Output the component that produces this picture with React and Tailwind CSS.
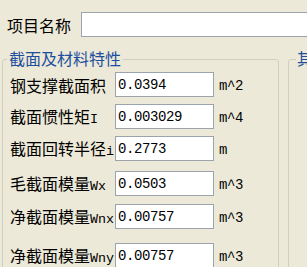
import React from "react";

const rows = [
  { cn: "钢支撑截面积", en: "", value: "0.0394", unit: "m^2", mt: "mt-[12px]" },
  { cn: "截面惯性矩", en: "I", value: "0.003029", unit: "m^4", mt: "mt-[7px]" },
  { cn: "截面回转半径", en: "i", value: "0.2773", unit: "m", mt: "mt-[7px]" },
  { cn: "毛截面模量", en: "Wx", value: "0.0503", unit: "m^3", mt: "mt-[10px]" },
  { cn: "净截面模量", en: "Wnx", value: "0.00757", unit: "m^3", mt: "mt-[8px]" },
  { cn: "净截面模量", en: "Wny", value: "0.00757", unit: "m^3", mt: "mt-[14px]" },
];

const cjk = { fontFamily: '"Noto Sans CJK SC", "Noto Sans", sans-serif' };
const mono = { fontFamily: '"Liberation Mono", "DejaVu Sans Mono", monospace' };

function Field({ value, className = "" }) {
  return (
    <div
      className={`h-[25px] shrink-0 bg-white border border-[#9ba3ab] flex items-center pl-[2px] text-[14px] tracking-[-0.4px] text-black leading-none ${className}`}
      style={mono}
    >
      {value}
    </div>
  );
}

function Row({ r }) {
  return (
    <div className={`flex items-center ${r.mt}`}>
      <div
        className="w-[112px] shrink-0 pl-[7px] whitespace-nowrap text-[16px] leading-none text-black pt-[1px]"
        style={cjk}
      >
        {r.cn}
        {r.en && (
          <span className="text-[13.33px]" style={mono}>
            {r.en}
          </span>
        )}
      </div>
      <Field value={r.value} className="w-[99px]" />
      <div className="ml-[5px] mt-[3px] shrink-0 text-[14px] tracking-[-0.4px] leading-none text-black" style={mono}>
        {r.unit}
      </div>
    </div>
  );
}

export default function App() {
  return (
    <div className="w-[307px] h-[267px] bg-[#ECE9D8] overflow-hidden">
      <div className="flex items-center pt-[12px]">
        <div className="w-[81px] shrink-0 pl-[7px] whitespace-nowrap text-[16px] leading-none text-black" style={cjk}>
          项目名称
        </div>
        <Field value="" className="w-[240px]" />
      </div>

      <div className="flex mt-[22px]">
        <div className="relative ml-[2px] w-[277px] h-[240px] shrink-0 border border-[#D0D0BF] rounded-[3px]">
          <div
            className="absolute left-[4px] top-[-10px] px-[2px] bg-[#ECE9D8] whitespace-nowrap text-[16px] leading-none text-[#1d4f9e]"
            style={cjk}
          >
            截面及材料特性
          </div>
          {rows.map((r, i) => (
            <Row key={i} r={r} />
          ))}
        </div>
        <div className="relative ml-[9px] w-[60px] h-[240px] shrink-0 border border-[#D0D0BF] rounded-[3px]">
          <div
            className="absolute left-[7px] top-[-10px] px-[1px] bg-[#ECE9D8] text-[16px] leading-none text-[#1d4f9e]"
            style={cjk}
          >
            其
          </div>
        </div>
      </div>
    </div>
  );
}
